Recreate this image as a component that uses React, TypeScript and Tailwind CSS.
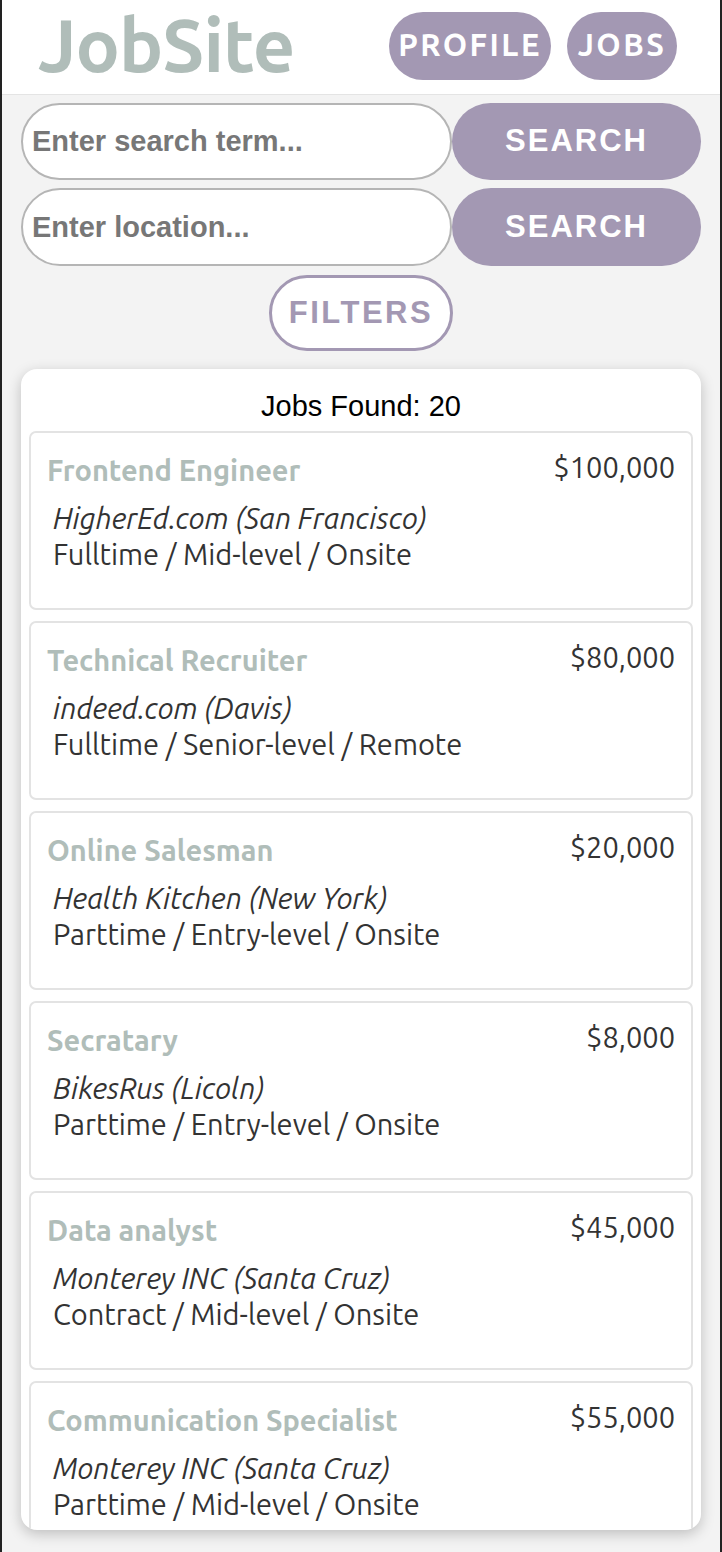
import React from 'react';

const jobs = [
  { title: 'Frontend Engineer', salary: '$100,000', company: 'HigherEd.com (San Francisco)', details: 'Fulltime / Mid-level / Onsite' },
  { title: 'Technical Recruiter', salary: '$80,000', company: 'indeed.com (Davis)', details: 'Fulltime / Senior-level / Remote' },
  { title: 'Online Salesman', salary: '$20,000', company: 'Health Kitchen (New York)', details: 'Parttime / Entry-level / Onsite' },
  { title: 'Secratary', salary: '$8,000', company: 'BikesRus (Licoln)', details: 'Parttime / Entry-level / Onsite' },
  { title: 'Data analyst', salary: '$45,000', company: 'Monterey INC (Santa Cruz)', details: 'Contract / Mid-level / Onsite' },
  { title: 'Communication Specialist', salary: '$55,000', company: 'Monterey INC (Santa Cruz)', details: 'Parttime / Mid-level / Onsite' },
];

const ubuntu = "font-['Ubuntu','Noto_Sans','Open_Sans',sans-serif]";

export default function App() {
  return (
    <div className="h-[1552px] bg-[#f3f3f3] border-x-2 border-[#222] flex flex-col overflow-hidden">
      {/* header */}
      <header className="h-[95px] shrink-0 bg-white border-b border-[#e4e4e4] flex items-center pl-[36px] pr-[43px]">
        <h1 className={`${ubuntu} text-[74px] font-bold text-[#b0bdb9] tracking-[-1px] leading-none mt-[-4px]`}>JobSite</h1>
        <nav className="ml-auto flex gap-[16px] mt-[-3px]">
          <button className={`${ubuntu} w-[162px] h-[68px] rounded-full bg-[#a398b3] text-white text-[31px] font-bold tracking-[2.5px]`}>PROFILE</button>
          <button className={`${ubuntu} w-[110px] h-[68px] rounded-full bg-[#a398b3] text-white text-[31px] font-bold tracking-[2.5px]`}>JOBS</button>
        </nav>
      </header>

      {/* search */}
      <div className="flex flex-col px-[19px] pt-[8px] gap-[8px] font-['Liberation_Sans',Arial,sans-serif]">
        <div className="flex">
          <input
            placeholder="Enter search term..."
            className="w-[431px] h-[77px] rounded-full border-2 border-[#b5b5b5] bg-white px-[9px] text-[29px] font-bold placeholder:text-[#777] outline-none"
          />
          <button className="flex-1 h-[77px] rounded-full bg-[#a398b3] text-white text-[31px] font-bold tracking-[2px]">SEARCH</button>
        </div>
        <div className="flex">
          <input
            placeholder="Enter location..."
            className="w-[431px] h-[78px] rounded-full border-2 border-[#b5b5b5] bg-white px-[9px] text-[29px] font-bold placeholder:text-[#777] outline-none"
          />
          <button className="flex-1 h-[78px] rounded-full bg-[#a398b3] text-white text-[31px] font-bold tracking-[2px]">SEARCH</button>
        </div>
        <div className="flex justify-center pt-[1px]">
          <button className="w-[184px] h-[76px] rounded-full border-[3px] border-[#a398b3] bg-white text-[#a398b3] text-[31px] font-bold tracking-[2.5px]">FILTERS</button>
        </div>
      </div>

      {/* results */}
      <div className="mx-[19px] mt-[18px] h-[1161px] bg-white rounded-[16px] shadow-[0_4px_14px_rgba(0,0,0,0.22)] overflow-hidden flex flex-col px-[8px]">
        <p className="text-center font-['Liberation_Sans',Arial,sans-serif] text-[29px] text-black pt-[19px] pb-[7px] leading-[36px]">Jobs Found: 20</p>
        <div className="flex flex-col gap-[11px]">
          {jobs.map((j) => (
            <div key={j.title} className={`${ubuntu} h-[179px] shrink-0 border-2 border-[#e3e3e3] rounded-[7px] pl-[16px] pr-[16px] pt-[17px]`}>
              <div className="flex justify-between items-start">
                <h2 className="text-[29px] font-bold text-[#b0bdb9] leading-[40px]">{j.title}</h2>
                <span className="text-[29px] text-[#333] leading-[34px]">{j.salary}</span>
              </div>
              <div className="pl-[6px] pt-[10px] text-[29px] text-[#333] leading-[36px]">
                <p className="italic">{j.company}</p>
                <p>{j.details}</p>
              </div>
            </div>
          ))}
        </div>
      </div>
    </div>
  );
}
